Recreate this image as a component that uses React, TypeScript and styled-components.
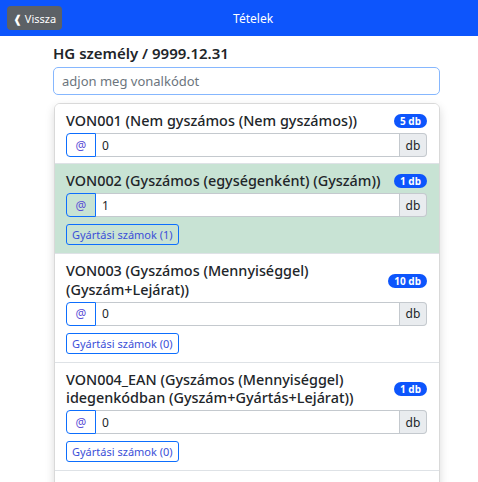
import React from 'react';
import styled, { createGlobalStyle } from 'styled-components';

const GlobalStyle = createGlobalStyle`
  body {
    margin: 0;
    font-family: "Noto Sans", "Open Sans", Arial, sans-serif;
    color: #212529;
    background: #fff;
  }
`;

type Item = {
  code: string;
  qty: string;
  badge: string;
  serials?: number;
  active?: boolean;
};

const items: Item[] = [
  { code: 'VON001 (Nem gyszámos (Nem gyszámos))', qty: '0', badge: '5 db' },
  { code: 'VON002 (Gyszámos (egységenként) (Gyszám))', qty: '1', badge: '1 db', serials: 1, active: true },
  { code: 'VON003 (Gyszámos (Mennyiséggel) (Gyszám+Lejárat))', qty: '0', badge: '10 db', serials: 0 },
  { code: 'VON004_EAN (Gyszámos (Mennyiséggel) idegenkódban (Gyszám+Gyártás+Lejárat))', qty: '0', badge: '1 db', serials: 0 },
  { code: 'VON005 (Mennyiségi egység (Nem gyszámos) (Mennyiséggel))', qty: '0', badge: '2 db' },
];

const App = () => {
  return (
    <>
      <GlobalStyle />
      <Header>
        <BackButton>❰ Vissza</BackButton>
        <HeaderTitle>Tételek</HeaderTitle>
        <HeaderSpacer />
      </Header>
      <Content>
        <Heading>HG személy / 9999.12.31</Heading>
        <Search placeholder="adjon meg vonalkódot" />
        <List>
          {items.map((item) => (
            <ListItem key={item.code} $active={item.active}>
              <TitleRow>
                <Title>{item.code}</Title>
                <Badge>{item.badge}</Badge>
              </TitleRow>
              <InputGroup>
                <AtButton>@</AtButton>
                <QtyInput defaultValue={item.qty} />
                <Addon>db</Addon>
              </InputGroup>
              {item.serials !== undefined && (
                <SerialButton>Gyártási számok ({item.serials})</SerialButton>
              )}
            </ListItem>
          ))}
        </List>
      </Content>
    </>
  );
};

export default App;

const Header = styled.header`
  height: 36px;
  background: #0d55fc;
  display: flex;
  align-items: center;
  padding: 0 7px;
  box-sizing: border-box;
`;

const BackButton = styled.button`
  height: 24px;
  padding: 0 6px;
  border: none;
  border-radius: 4px;
  background: #5c6166;
  color: #fff;
  font-family: inherit;
  font-size: 11px;
`;

const HeaderTitle = styled.div`
  flex: 1;
  text-align: center;
  color: #fff;
  font-size: 12px;
`;

const HeaderSpacer = styled.div`
  width: 27px;
`;

const Content = styled.main`
  padding: 0 38px 0 53px;
`;

const Heading = styled.div`
  margin: 7px 0 4px;
  font-size: 15px;
  font-weight: 600;
  line-height: 20px;
`;

const Search = styled.input`
  display: block;
  width: 100%;
  height: 28px;
  box-sizing: border-box;
  border: 1px solid #86b7fe;
  border-radius: 5px;
  padding: 0 8px;
  font-family: inherit;
  font-size: 13px;
  outline: none;
  &::placeholder {
    color: #6c757d;
  }
`;

const List = styled.div`
  margin: 8px 0 0 1px;
  border: 1px solid rgba(0, 0, 0, 0.15);
  border-radius: 6px 6px 0 0;
  box-shadow: 0 4px 10px rgba(0, 0, 0, 0.15);
  overflow: hidden;
`;

const ListItem = styled.div<{ $active?: boolean }>`
  padding: 8px 12px 6px 11px;
  background: ${(p) => (p.$active ? '#c8e3d4' : '#fff')};
  border-top: 1px solid #dee2e6;
  &:first-child {
    border-top: none;
  }
`;

const TitleRow = styled.div`
  display: flex;
  align-items: center;
  gap: 10px;
`;

const Title = styled.div`
  flex: 1;
  font-size: 14.4px;
  font-weight: 500;
  line-height: 18.5px;
`;

const Badge = styled.span`
  background: #0d55fc;
  color: #fff;
  font-size: 10px;
  font-weight: 700;
  line-height: 14px;
  padding: 0 6px;
  border-radius: 8px;
  white-space: nowrap;
`;

const InputGroup = styled.div`
  display: flex;
  height: 24px;
  margin-top: 2.5px;
`;

const AtButton = styled.button`
  width: 30px;
  border: 1px solid #0d6efd;
  border-radius: 4px 0 0 4px;
  background: transparent;
  color: #5b4fd6;
  font-family: inherit;
  font-size: 12px;
  padding: 0;
`;

const QtyInput = styled.input`
  flex: 1;
  min-width: 0;
  border: 1px solid #c4c9ce;
  border-left: none;
  background: #fff;
  padding: 0 6px;
  font-family: inherit;
  font-size: 12px;
  color: #212529;
  outline: none;
`;

const Addon = styled.span`
  width: 26px;
  display: flex;
  align-items: center;
  justify-content: center;
  background: #e9ecef;
  border: 1px solid #c4c9ce;
  border-left: none;
  border-radius: 0 4px 4px 0;
  font-size: 12px;
`;

const SerialButton = styled.button`
  display: block;
  margin: 7px 0 2px;
  height: 21px;
  padding: 0 5px;
  border: 1px solid #0d6efd;
  border-radius: 3px;
  background: transparent;
  color: #3b4fd8;
  font-family: inherit;
  font-size: 11px;
`;
